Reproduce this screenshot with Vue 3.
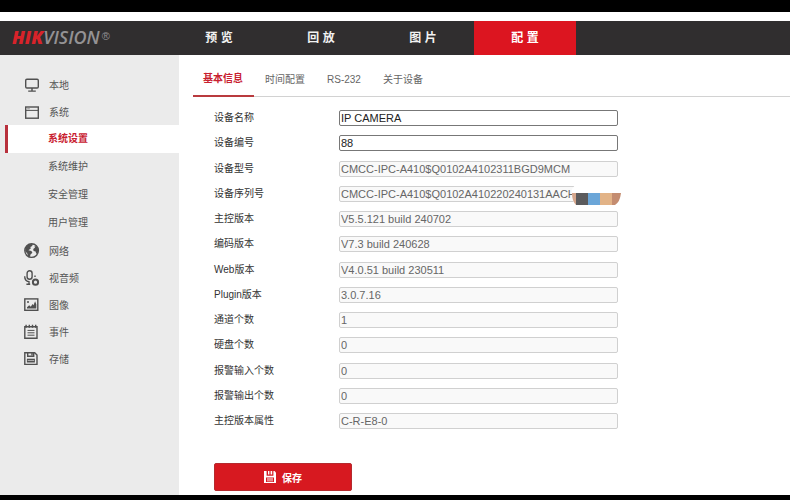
<script setup>
import { reactive } from 'vue'

const topNav = [
  { label: '预 览' },
  { label: '回 放' },
  { label: '图 片' },
  { label: '配 置', active: true }
]

const menu = [
  { icon: 'monitor', label: '本地' },
  {
    icon: 'window',
    label: '系统',
    children: [
      { label: '系统设置', active: true },
      { label: '系统维护' },
      { label: '安全管理' },
      { label: '用户管理' }
    ]
  },
  { icon: 'globe', label: '网络' },
  { icon: 'mic', label: '视音频' },
  { icon: 'image', label: '图像' },
  { icon: 'event', label: '事件' },
  { icon: 'disk', label: '存储' }
]

const tabs = [
  { label: '基本信息', active: true },
  { label: '时间配置' },
  { label: 'RS-232' },
  { label: '关于设备' }
]

const fields = reactive([
  { id: 'name', label: '设备名称', value: 'IP CAMERA', editable: true },
  { id: 'number', label: '设备编号', value: '88', editable: true },
  { id: 'model', label: '设备型号', value: 'CMCC-IPC-A410$Q0102A4102311BGD9MCM' },
  { id: 'serial', label: '设备序列号', value: 'CMCC-IPC-A410$Q0102A410220240131AACH', masked: true },
  { id: 'firmware', label: '主控版本', value: 'V5.5.121 build 240702' },
  { id: 'encoding', label: '编码版本', value: 'V7.3 build 240628' },
  { id: 'web', label: 'Web版本', value: 'V4.0.51 build 230511' },
  { id: 'plugin', label: 'Plugin版本', value: '3.0.7.16' },
  { id: 'channels', label: '通道个数', value: '1' },
  { id: 'disks', label: '硬盘个数', value: '0' },
  { id: 'alarm-in', label: '报警输入个数', value: '0' },
  { id: 'alarm-out', label: '报警输出个数', value: '0' },
  { id: 'property', label: '主控版本属性', value: 'C-R-E8-0' }
])
</script>

<template>
  <div class="page">
    <header class="topbar">
      <a class="logo" href="#"><span class="logo-hik">HIK</span><span class="logo-vision">VISION</span><span class="logo-reg">®</span></a>
      <nav class="topnav">
        <a v-for="item in topNav" :key="item.label" href="#" :class="{ active: item.active }">{{ item.label }}</a>
      </nav>
    </header>

    <div class="body">
      <aside class="sidebar">
        <template v-for="item in menu" :key="item.label">
          <a class="item" href="#">
            <svg class="icon" viewBox="0 0 16 16" fill="none" stroke="currentColor" stroke-width="1.4" aria-hidden="true">
              <template v-if="item.icon === 'monitor'">
                <rect x="1.7" y="2.2" width="12.6" height="8.8" rx="1.2" />
                <path d="M8 11v2.7M4.2 14.100h7.6" />
              </template>
              <template v-else-if="item.icon === 'window'">
                <rect x="1.7" y="3" width="12.6" height="11.2" />
                <path d="M2 6.4h12" stroke-width="1" />
                <path d="M3.2 4.8h2.6" stroke-width=".6" />
              </template>
              <template v-else-if="item.icon === 'globe'">
                <circle cx="7.600" cy="7.600" r="6.8" />
                <path d="M1.600 4.500 4.600 1.300l4.200-.4-.6 2.200L6.400 4l.4 1.600-2.400 1.600 3 .7 1 1.800-1.900 1.800-.6 2.400-2-.8-.6-2.500L1.100 8z" fill="currentColor" stroke="none" />
                <path d="m10.600 3 2.300.5 1.500 3.200-.6 3.400-1.600.6-.6-2.200-2-.6-.4-2 1.700-1.200z" fill="currentColor" stroke="none" />
              </template>
              <template v-else-if="item.icon === 'mic'">
                <rect x="3.1" y=".7" width="5" height="8.600" rx="2.5" />
                <path d="M.7 6.200c0 4 2 5.400 4.900 5.400M11 5.600v1.500M5 11.600v2.400M2.400 14.200h3.800" />
                <circle cx="11.500" cy="12.200" r="2.6" stroke-width="2" />
              </template>
              <template v-else-if="item.icon === 'image'">
                <rect x=".8" y="1.900" width="13" height="11.4" />
                <path d="M3 11.500v-1.300l2.200-2 1.600 1.600 1.700-2.800 1 1.200 1.600-4 1.200 3v4.3z" fill="currentColor" stroke="none" />
                <circle cx="4" cy="5" r="1" fill="currentColor" stroke="none" />
              </template>
              <template v-else-if="item.icon === 'event'">
                <path d="M.8 2.700h12.200v11.600H.8z" />
                <path d="M2.100.800v3M5.300.800v3M8.500.800v3M11.700.800v3" />
                <path d="M3.500 6.400h7M3.500 8.800h7M3.500 11.200h7" stroke-width="1" />
              </template>
              <template v-else>
                <path d="M.8 1.700h9.900L13 4v9.400H.8z" />
                <path d="M3.700 1.700v3.600h6V1.700" />
                <path d="M8 2.100v2.400" />
                <path d="M2.900 7.700h8v3.800h-8z" fill="currentColor" stroke="none" />
                <path d="M3.700 9.500h6.400" stroke="#ebebeb" stroke-width=".6" />
              </template>
            </svg>
            <span>{{ item.label }}</span>
          </a>
          <a
            v-for="child in item.children"
            :key="child.label"
            class="subitem"
            :class="{ active: child.active }"
            href="#"
          >{{ child.label }}</a>
        </template>
      </aside>

      <main class="content">
        <nav class="tabs">
          <a v-for="tab in tabs" :key="tab.label" href="#" :class="{ active: tab.active }">{{ tab.label }}</a>
        </nav>
        <form class="form" @submit.prevent>
          <div class="fields">
            <div v-for="field in fields" :key="field.id" class="field">
              <label :for="field.id">{{ field.label }}</label>
              <div class="control">
                <input :id="field.id" v-model="field.value" type="text" :disabled="!field.editable" />
                <svg v-if="field.masked" class="mask" viewBox="0 0 50 22" aria-hidden="true">
                  <path d="M4 0H50V22H5Q1 16 1 4z" fill="#fff" />
                  <path d="M1 8h4v12Q1 16 1 8z" fill="#d5a68c" />
                  <path d="M5 8h12v12H5z" fill="#5b5b5d" />
                  <path d="M17 8h12v12H17z" fill="#6ba6d8" />
                  <path d="M29 8h12v12H29z" fill="#e2b387" />
                  <path d="M41 8h9q-1 9-6 12h-3z" fill="#c48c70" />
                </svg>
              </div>
            </div>
          </div>
          <button class="save" type="submit">
            <svg viewBox="0 0 12 12" aria-hidden="true">
              <path d="M0 0h10.5L12 1.500V12H0z" fill="#fff" />
              <path d="M2.600 0h6.800v4.700H2.600zM2 6.600h8v4.400H2z" fill="#d71920" />
              <path d="M4 0h1.400v3.600H4zM6.600 0h1.600v3.600H6.600zM3 7.600h6v.9H3zM3 9.400h6v.9H3z" fill="#fff" />
            </svg>
            <span>保存</span>
          </button>
        </form>
      </main>
    </div>
  </div>
</template>

<style>
body {
  margin: 0;
  background: #fff;
}
</style>

<style scoped>
.page {
  box-sizing: border-box;
  min-height: 100vh;
  display: flex;
  flex-direction: column;
  border-top: 12px solid #000;
  border-bottom: 5px solid #000;
  padding-top: 9px;
  font-family: "Liberation Sans", "Noto Sans CJK SC", sans-serif;
  font-size: 10px;
  color: #333;
}

a {
  color: inherit;
  text-decoration: none;
}

.topbar {
  display: flex;
  height: 34px;
  background: #302e2f;
}

.logo {
  box-sizing: border-box;
  flex: 0 0 168px;
  padding-left: 12px;
  font-family: "Open Sans", "Noto Sans", sans-serif;
  font-size: 18px;
  font-style: italic;
  line-height: 33px;
  white-space: nowrap;
}

.logo-hik {
  color: #d8232a;
  font-weight: 800;
}

.logo-vision {
  color: #949294;
  font-weight: 600;
}

.logo-reg {
  color: #949294;
  font-family: "Liberation Sans", sans-serif;
  font-size: 11px;
  font-style: normal;
  line-height: 11px;
  vertical-align: 4px;
  margin-left: 2px;
}

.topnav {
  display: flex;
}

.topnav a {
  width: 102px;
  line-height: 34px;
  text-align: center;
  font-size: 12px;
  font-weight: 700;
  color: #f2f2f2;
}

.topnav a.active {
  background: #dc1520;
  color: #fff;
}

.body {
  flex: 1;
  display: flex;
}

.sidebar {
  box-sizing: border-box;
  flex: 0 0 179px;
  padding-top: 16px;
  background: #ebebeb;
  color: #555;
}

.item {
  display: flex;
  align-items: center;
  gap: 9px;
  height: 27px;
  padding-left: 24px;
}

.icon {
  width: 16px;
  height: 16px;
  color: #505050;
}

.subitem {
  display: block;
  margin-left: 5px;
  padding-left: 43px;
  line-height: 28px;
}

.subitem.active {
  padding-left: 40px;
  border-left: 3px solid #b8303c;
  background: #fff;
  color: #c8202f;
  font-weight: 700;
}

.content {
  flex: 1;
  min-width: 0;
  display: flex;
  flex-direction: column;
  padding: 8px 0 4px 14px;
}

.tabs {
  display: flex;
  gap: 1px;
  border-bottom: 1px solid #d2d2d2;
  color: #666;
}

.tabs a {
  padding: 0 11px 0 10px;
  line-height: 33px;
}

.tabs a.active {
  margin-bottom: -1px;
  border-bottom: 2px solid #b93a3e;
  line-height: 32px;
  color: #c8202f;
  font-weight: 700;
}

.form {
  flex: 1;
  display: flex;
  flex-direction: column;
  gap: 34px;
  padding: 13px 0 0 21px;
}

.fields {
  flex: 1;
  display: flex;
  flex-direction: column;
  justify-content: space-between;
}

.field {
  display: flex;
  align-items: center;
}

.field label {
  flex: 0 0 125px;
  line-height: 16px;
}

.control {
  position: relative;
  flex: 0 1 279px;
  display: flex;
}

.control input {
  box-sizing: border-box;
  width: 100%;
  height: 16px;
  margin: 0;
  padding: 0 1px;
  border: 1px solid #777;
  border-radius: 2px;
  background: #fff;
  font-family: "Liberation Sans", sans-serif;
  font-size: 11px;
  color: #222;
}

.control input:disabled {
  border-color: #d0d0d0;
  background: #f9f9f9;
  color: #666;
}

.mask {
  position: absolute;
  top: -1px;
  right: -3px;
  width: 50px;
  height: 22px;
}

.save {
  display: flex;
  align-items: center;
  justify-content: center;
  gap: 6px;
  width: 138px;
  height: 28px;
  padding: 0;
  border: 1px solid #b52a2e;
  border-radius: 2px;
  background: #d71920;
  color: #fff;
  font: inherit;
  font-weight: 700;
}

.save svg {
  width: 12px;
  height: 12px;
}
</style>
